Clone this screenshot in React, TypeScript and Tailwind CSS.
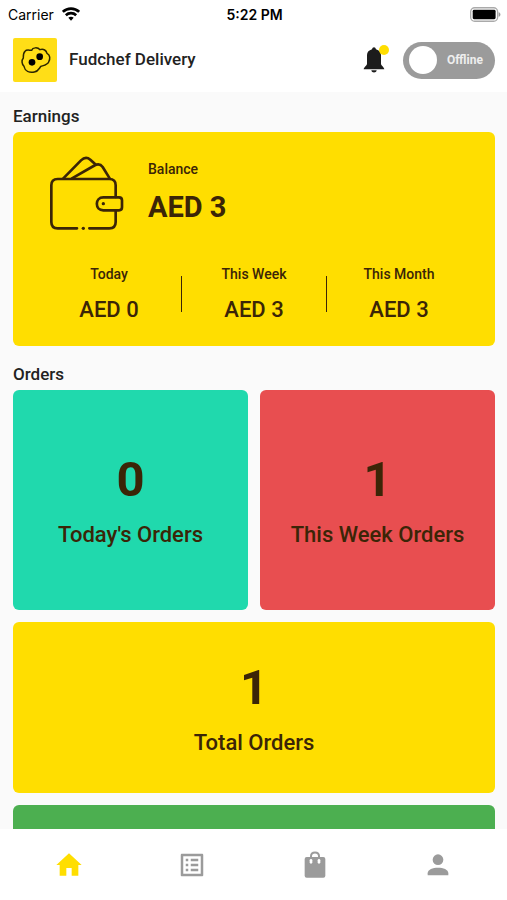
import React, { useState } from 'react';
import { MdListAlt } from 'react-icons/md';

interface PeriodEarning {
  label: string;
  amount: number;
}

interface NavItem {
  label: string;
  icon: React.ReactNode;
}

const earnings: PeriodEarning[] = [
  { label: 'Today', amount: 0 },
  { label: 'This Week', amount: 3 },
  { label: 'This Month', amount: 3 },
];

const formatAed = (value: number) => `AED ${value}`;

const WifiIcon: React.FC = () => (
  <svg viewBox="0 0 54 42" className="h-[14px] w-[18px]" fill="none" stroke="#000" strokeWidth="8">
    <path d="M2.500 14.500C16 1.500 38 1.500 51.500 14.500" />
    <path d="M11.500 24.500C20 16.500 34 16.500 42.500 24.500" />
    <path d="M27 41l-8-9c4.500-4 11.500-4 16 0z" fill="#000" stroke="none" />
  </svg>
);

const BatteryIcon: React.FC = () => (
  <svg viewBox="0 0 92 44" className="h-[15px] w-[31px]">
    <rect x="2" y="2" width="80" height="40" rx="12" fill="#fff" stroke="#aaa" strokeWidth="4" />
    <rect x="8" y="8" width="68" height="28" rx="4" fill="#000" />
    <path d="M85 15c7 2 7 12 0 14z" fill="#999" />
  </svg>
);

const Logo: React.FC = () => (
  <svg viewBox="0 0 132 132" className="size-11 rounded-xs bg-[#ffde17]">
    <path
      d="M36 40C42 33 50 38 56 37C59 28 74 27 81 35C92 31 100 38 102 46C112 51 112 63 107 72C104 80 93 82 84 85C78 91 77 100 64 102C49 105 36 99 33 85C26 78 25 67 31 60C31 52 30 45 36 40Z"
      fill="none"
      stroke="#2b2600"
      strokeWidth="4.500"
    />
    <circle cx="57" cy="73" r="10" />
    <circle cx="80" cy="56" r="10" />
  </svg>
);

const BellIcon: React.FC = () => (
  <svg viewBox="0 0 66 78" className="h-[26px] w-[22px]" fill="#1c1c1c">
    <path d="M33 1c3 0 5 2 6 6c9 3 15 8 15 17v26c0 6 9 9 10 17H2c1-8 10-11 10-17V24c0-9 6-14 15-17c1-4 3-6 6-6z" />
    <path d="M25 70h16c-1 9-15 9-16 0z" />
  </svg>
);

const WalletIcon: React.FC = () => (
  <svg viewBox="0 0 225 228" className="h-[76px] w-[75px]" fill="none" stroke="#3b2507" strokeWidth="8" strokeLinecap="round" strokeLinejoin="round">
    <path d="M84 220H26C13 220 7 213 7 201V91C7 79 14 72 26 72H181C193 72 200 79 200 91V126" />
    <path d="M200 166V201C200 213 193 220 181 220H121" />
    <path d="M163 127H210C216 127 219 130 219 136V157C219 163 216 166 210 166H163C137 166 137 127 163 127Z" />
    <path d="M43 70L96 16C106 6 115 6 124 14L139 28" />
    <path d="M69 70L139 30C149 26 156 29 161 36L182 70" />
    <circle cx="163" cy="146" r="5" fill="#3b2507" stroke="none" />
    <circle cx="103" cy="220" r="5" fill="#3b2507" stroke="none" />
  </svg>
);

const HomeIcon: React.FC = () => (
  <svg viewBox="0 0 78 69" className="h-[23px] w-[26px]" fill="#ffde00">
    <path d="M39 1L77 36H67V68H47V45H31V68H11V36H1Z" />
  </svg>
);

const BagIcon: React.FC = () => (
  <svg viewBox="0 0 66 81" className="h-[27px] w-[22px]">
    <path d="M21 24V16C21 1 45 1 45 16V24" fill="none" stroke="#9b9b9b" strokeWidth="6" />
    <rect x="2" y="18" width="62" height="62" rx="6" fill="#9b9b9b" />
    <rect x="17" y="24" width="8" height="14" rx="4" fill="#fff" />
    <rect x="41" y="24" width="8" height="14" rx="4" fill="#fff" />
  </svg>
);

const PersonIcon: React.FC = () => (
  <svg viewBox="0 0 66 66" className="size-[22px]" fill="#9b9b9b">
    <circle cx="33" cy="17" r="16" />
    <path d="M2 64V58C2 36 64 36 64 58V64Z" />
  </svg>
);

const navItems: NavItem[] = [
  { label: 'Home', icon: <HomeIcon /> },
  { label: 'Order list', icon: <MdListAlt className="size-[30px] text-[#9b9b9b]" /> },
  { label: 'Bag', icon: <BagIcon /> },
  { label: 'Profile', icon: <PersonIcon /> },
];

const StatusBar: React.FC = () => (
  <div className="grid h-7 grid-cols-3 items-center pr-1.5 pl-2 text-[14px] text-black">
    <div className="flex items-center gap-2 font-['Inter',sans-serif]">
      <span>Carrier</span>
      <WifiIcon />
    </div>
    <span className="text-center font-['Inter',sans-serif] font-semibold">5:22 PM</span>
    <div className="flex justify-end">
      <BatteryIcon />
    </div>
  </div>
);

interface OrderCardProps {
  count: number;
  label: string;
  className: string;
}

const OrderCard: React.FC<OrderCardProps> = ({ count, label, className }) => (
  <div className={`flex flex-col items-center justify-center rounded-md text-[#3b2507] ${className}`}>
    <p className="text-[49px] leading-[58px] font-bold">{count}</p>
    <p className="mt-3 text-[22px] leading-7 font-medium">{label}</p>
  </div>
);

const App: React.FC = () => {
  const [online, setOnline] = useState(false);

  return (
    <div className="flex h-screen flex-col bg-white font-['Roboto',sans-serif] text-[#222]">
      <StatusBar />

      <header className="flex h-16 shrink-0 items-center pr-3 pl-[13px]">
        <Logo />
        <h1 className="ml-3 text-[17px] font-medium">Fudchef Delivery</h1>
        <button type="button" aria-label="Notifications" className="relative ml-auto">
          <BellIcon />
          <span className="absolute -top-0.5 -right-1 size-2.5 rounded-full bg-[#ffde00]" />
        </button>
        <label className="relative ml-[18px] flex h-[37px] w-[92px] items-center rounded-full bg-[#9b9b9b] px-1.5">
          <input type="checkbox" className="peer sr-only" checked={online} onChange={(e) => setOnline(e.target.checked)} />
          <span className="size-7 rounded-full bg-white peer-checked:order-last" />
          <span className="flex-1 pl-1 text-center text-[12px] font-bold text-[#eee]">{online ? 'Online' : 'Offline'}</span>
        </label>
      </header>

      <main className="min-h-0 flex-1 overflow-y-auto bg-[#fafafa] pt-3 pr-3 pl-[13px] [scrollbar-width:none]">
        <h2 className="text-[17px] leading-6 font-medium">Earnings</h2>
        <section className="mt-1 rounded-md bg-[#ffde00] pt-[23px] pb-[22px] text-[#3b2507]">
          <div className="flex items-center pl-9">
            <WalletIcon />
            <div className="ml-6">
              <p className="text-[14px] leading-5 font-medium">Balance</p>
              <p className="mt-2 text-[29px] leading-10 font-bold">{formatAed(3)}</p>
            </div>
          </div>
          <div className="mt-[33px] flex items-center px-6">
            {earnings.map((item, index) => (
              <React.Fragment key={item.label}>
                {index > 0 && <div className="h-9 w-px bg-[#3b2507]" />}
                <div className="flex-1 text-center font-medium">
                  <p className="text-[14px] leading-5">{item.label}</p>
                  <p className="mt-3 text-[22px] leading-7">{formatAed(item.amount)}</p>
                </div>
              </React.Fragment>
            ))}
          </div>
        </section>

        <h2 className="mt-4 text-[17px] leading-6 font-medium">Orders</h2>
        <section className="mt-1 grid grid-cols-2 gap-3 pb-3">
          <OrderCard count={0} label="Today's Orders" className="h-[220px] bg-[#20d9ad]" />
          <OrderCard count={1} label="This Week Orders" className="h-[220px] bg-[#e84e50]" />
          <OrderCard count={1} label="Total Orders" className="col-span-2 h-[171px] bg-[#ffde00]" />
          <div className="col-span-2 h-[171px] rounded-md bg-[#4caf50]" />
        </section>
      </main>

      <nav className="grid h-[71px] shrink-0 grid-cols-4 bg-white px-[7px]">
        {navItems.map((item) => (
          <button key={item.label} type="button" aria-label={item.label} className="flex items-center justify-center">
            {item.icon}
          </button>
        ))}
      </nav>
    </div>
  );
};

export default App;
